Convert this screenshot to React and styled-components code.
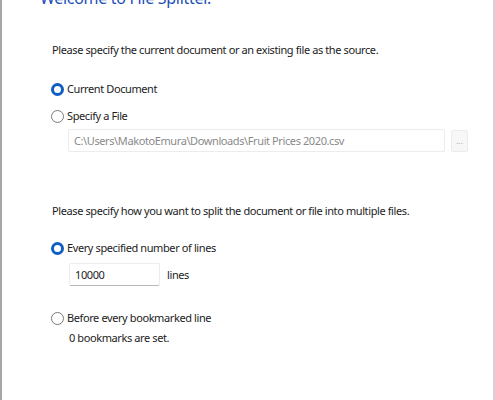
import React, { useState } from 'react'
import styled, { createGlobalStyle } from 'styled-components'

const Global = createGlobalStyle`
  html, body {
    margin: 0;
    padding: 0;
    background: #ffffff;
  }
  body {
    font-family: "Noto Sans", "Open Sans", sans-serif;
    overflow: hidden;
  }
`

function Radio({ checked, label, onClick }) {
	return (
		<RadioRow onClick={onClick}>
			<RadioCircle checked={checked} />
			<span>{label}</span>
		</RadioRow>
	)
}

function App() {
	const [source, setSource] = useState('current')
	const [mode, setMode] = useState('lines')

	return (
		<Window>
			<Global />
			<Title>Welcome to File Splitter.</Title>
			<Content>
				<Prompt>Please specify the current document or an existing file as the source.</Prompt>

				<Options>
					<Radio checked={source === 'current'} label="Current Document" onClick={() => setSource('current')} />
					<Radio checked={source === 'file'} label="Specify a File" onClick={() => setSource('file')} />
				</Options>

				<FileRow>
					<PathInput disabled defaultValue="C:\Users\MakotoEmura\Downloads\Fruit Prices 2020.csv" />
					<BrowseButton disabled>...</BrowseButton>
				</FileRow>

				<Prompt second>Please specify how you want to split the document or file into multiple files.</Prompt>

				<Radio checked={mode === 'lines'} label="Every specified number of lines" onClick={() => setMode('lines')} />
				<LinesRow>
					<NumberInput defaultValue="10000" />
					<span>lines</span>
				</LinesRow>

				<BookmarkBlock>
					<Radio checked={mode === 'bookmark'} label="Before every bookmarked line" onClick={() => setMode('bookmark')} />
					<Note>0 bookmarks are set.</Note>
				</BookmarkBlock>
			</Content>
		</Window>
	)
}

export default App

const Window = styled.div`
  height: 400px;
  box-sizing: border-box;
  border-left: 2px solid #a6a6a6;
  border-right: 2px solid #d4d4d4;
  background: #fff;
  overflow: hidden;
  color: #1c1c1c;
  font-size: 11px;
  letter-spacing: -0.4px;
`

const Title = styled.h1`
  margin: -13px 0 0 38px;
  font-weight: 400;
  font-size: 16px;
  letter-spacing: -0.3px;
  line-height: 22px;
  color: #1d4fb8;
`

const Content = styled.div`
  padding: 33px 0 0 50px;
`

const Prompt = styled.div`
  line-height: 16px;
  margin-top: ${(p) => (p.second ? '51px' : '0')};
  margin-bottom: ${(p) => (p.second ? '21px' : '23px')};
`

const Options = styled.div`
  display: flex;
  flex-direction: column;
  gap: 11px;
`

const RadioRow = styled.label`
  display: flex;
  align-items: center;
  gap: 3px;
  margin-left: -1px;
  line-height: 16px;
  cursor: pointer;
`

const RadioCircle = styled.span`
  box-sizing: border-box;
  width: 13px;
  height: 13px;
  border-radius: 50%;
  background: #fff;
  border: ${(p) => (p.checked ? '3.5px solid #0d5fc4' : '1px solid #7a7a7a')};
`

const FileRow = styled.div`
  display: flex;
  align-items: center;
  gap: 6px;
  margin: 5px 0 0 16px;
`

const PathInput = styled.input`
  box-sizing: border-box;
  width: 377px;
  height: 23px;
  padding: 0 5px;
  border: 1px solid #ececec;
  border-radius: 2px;
  background: #fff;
  color: #8a8a8a;
  font: inherit;
  letter-spacing: inherit;
  outline: none;
`

const BrowseButton = styled.button`
  box-sizing: border-box;
  width: 17px;
  height: 22px;
  padding: 0;
  border: 1px solid #ececec;
  border-radius: 2px;
  background: #f7f7f7;
  color: #b0b0b0;
  font: inherit;
  font-size: 9px;
`

const LinesRow = styled.div`
  display: flex;
  align-items: center;
  gap: 7px;
  margin: 7px 0 0 17px;
`

const NumberInput = styled.input`
  box-sizing: border-box;
  width: 91px;
  height: 23px;
  padding: 0 5px;
  border: 1px solid #ececec;
  border-bottom: 1px solid #b8b8b8;
  border-radius: 2px;
  background: #fff;
  color: #1c1c1c;
  font: inherit;
  letter-spacing: inherit;
  outline: none;
`

const BookmarkBlock = styled.div`
  margin-top: 24px;
`

const Note = styled.div`
  margin: 4px 0 0 17px;
  line-height: 16px;
`
